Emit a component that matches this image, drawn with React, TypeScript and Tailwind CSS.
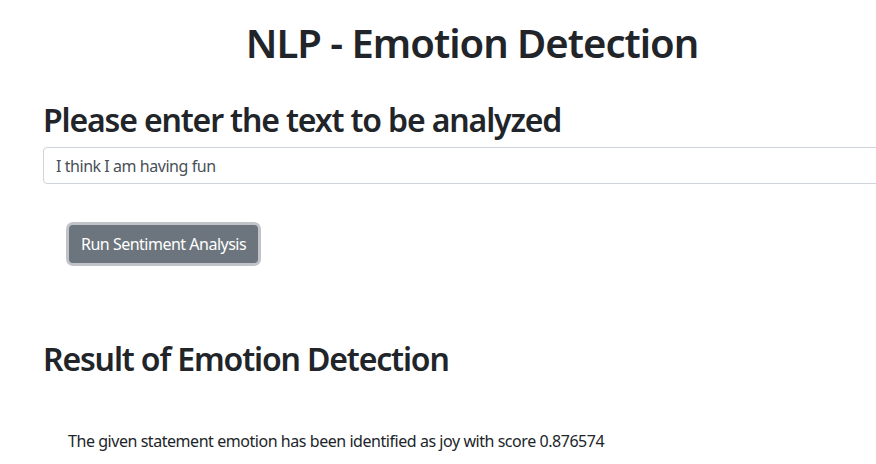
export default function App() {
  return (
    <div className="h-[464px] w-[876px] overflow-hidden bg-white text-[#212529] [font-family:'Noto_Sans',sans-serif]">
      <div className="ml-[43px] w-[858px]">
        <h1 className="pt-[19px] text-center text-[40px] font-semibold leading-[48px] tracking-[-1px]">NLP - Emotion Detection</h1>
        <h2 className="mt-[34px] text-[32px] font-semibold leading-[38px] tracking-[-1.15px]">Please enter the text to be analyzed</h2>
        <input
          type="text"
          defaultValue="I think I am having fun"
          className="mt-[8px] block h-[37px] w-full rounded border border-[#ced4da] px-3 text-base tracking-[-0.45px] text-[#495057] outline-none"
        />
        <div className="pl-[26px] pt-[41px]">
          <button className="h-[38px] rounded bg-[#6c757d] px-3 text-base tracking-[-0.5px] text-white shadow-[0_0_0_3px_rgba(130,138,145,0.5)]">
            Run Sentiment Analysis
          </button>
        </div>
        <h2 className="mt-[77px] text-[32px] font-semibold leading-[38px] tracking-[-1.15px]">Result of Emotion Detection</h2>
        <p className="mt-[51px] pl-[25px] text-base tracking-[-0.45px]">The given statement emotion has been identified as joy with score 0.876574</p>
      </div>
    </div>
  );
}
